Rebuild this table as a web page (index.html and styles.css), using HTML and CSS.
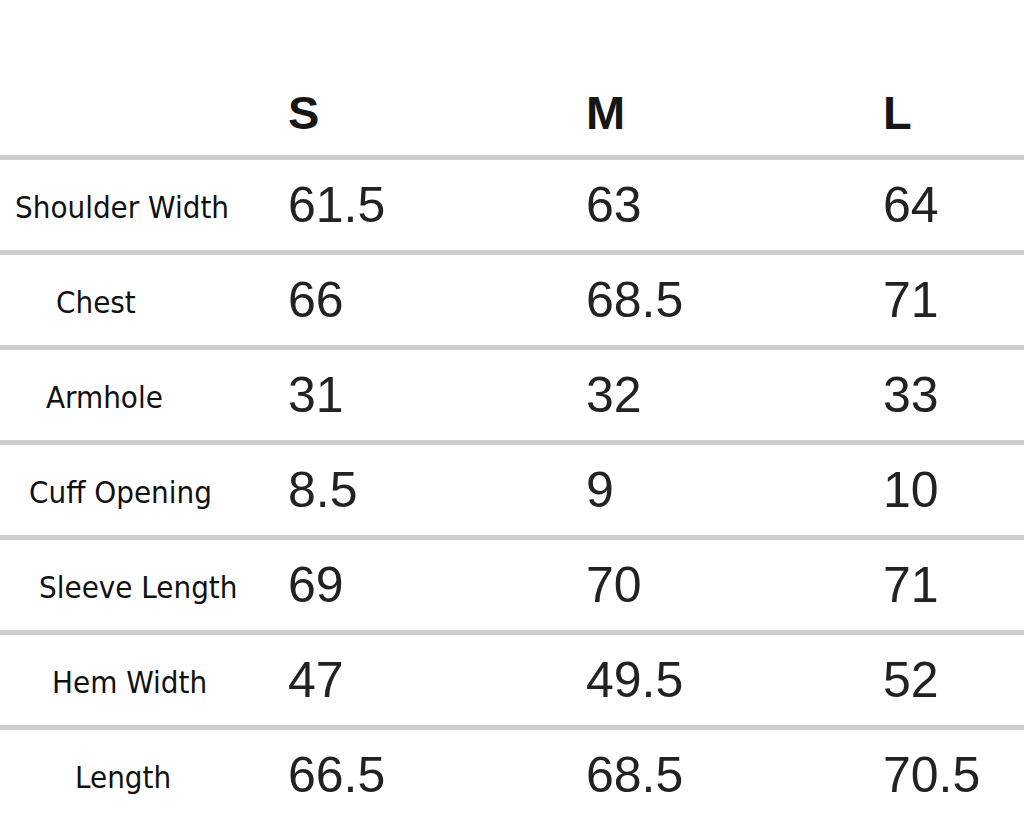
FILE: index.html
```html
<!DOCTYPE html>
<html>
<head>
<meta charset="utf-8">
<link rel="stylesheet" href="styles.css">
</head>
<body>
<div class="chart">
  <div class="row head">
    <div class="label"></div>
    <div class="size">S</div>
    <div class="size">M</div>
    <div class="size">L</div>
  </div>
  <div class="row">
    <div class="label l-shoulder">Shoulder Width</div>
    <div class="val">61.5</div><div class="val">63</div><div class="val">64</div>
  </div>
  <div class="row">
    <div class="label l-chest">Chest</div>
    <div class="val">66</div><div class="val">68.5</div><div class="val">71</div>
  </div>
  <div class="row">
    <div class="label l-armhole">Armhole</div>
    <div class="val">31</div><div class="val">32</div><div class="val">33</div>
  </div>
  <div class="row">
    <div class="label l-cuff">Cuff Opening</div>
    <div class="val">8.5</div><div class="val">9</div><div class="val">10</div>
  </div>
  <div class="row">
    <div class="label l-sleeve">Sleeve Length</div>
    <div class="val">69</div><div class="val">70</div><div class="val">71</div>
  </div>
  <div class="row">
    <div class="label l-hem">Hem Width</div>
    <div class="val">47</div><div class="val">49.5</div><div class="val">52</div>
  </div>
  <div class="row">
    <div class="label l-length">Length</div>
    <div class="val">66.5</div><div class="val">68.5</div><div class="val">70.5</div>
  </div>
</div>
</body>
</html>
```

FILE: styles.css
```css
html, body {
  margin: 0;
  padding: 0;
  background: #ffffff;
}
.chart {
  width: 1024px;
  display: flex;
  flex-direction: column;
}
.row {
  display: grid;
  grid-template-columns: 288px 298px 297px 1fr;
  align-items: center;
  height: 90px;
  border-top: 5px solid #cdcdcd;
}
.row.head {
  height: 155px;
  border-top: none;
  align-items: end;
  padding-bottom: 19px;
  box-sizing: border-box;
}
.size {
  font-family: "Liberation Sans", Arial, sans-serif;
  font-weight: bold;
  font-size: 47px;
  line-height: 46px;
  color: #161616;
}
.val {
  font-family: "Liberation Sans", Arial, sans-serif;
  font-size: 50px;
  line-height: 50px;
  color: #222222;
}
.label {
  font-family: "DejaVu Sans Condensed", "DejaVu Sans", sans-serif;
  font-size: 31px;
  line-height: 32px;
  padding-top: 4px;
  color: #111111;
  white-space: nowrap;
}
.l-shoulder { padding-left: 15px; }
.l-chest { padding-left: 56px; }
.l-armhole { padding-left: 46px; }
.l-cuff { padding-left: 29px; }
.l-sleeve { padding-left: 39px; }
.l-hem { padding-left: 52px; }
.l-length { padding-left: 75px; }
```
